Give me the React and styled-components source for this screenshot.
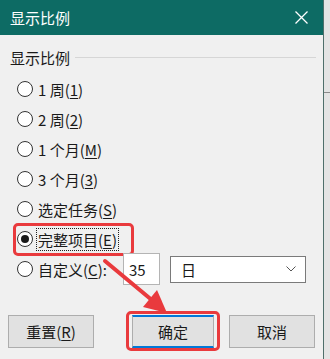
import React from "react";
import styled, { createGlobalStyle } from "styled-components";

const GlobalStyle = createGlobalStyle`
  html, body {
    margin: 0;
    padding: 0;
  }
  body {
    background: #e6e6e6;
    font-family: "Noto Sans CJK SC", "Microsoft YaHei", sans-serif;
  }
`;

const Screen = styled.div`
  display: flex;
  width: 330px;
  height: 359px;
  overflow: hidden;
`;

const Dialog = styled.div`
  position: relative;
  width: 323px;
  height: 359px;
  background: #f0f0f0;
  border-right: 1px solid #4f6f6b;
  display: flex;
  flex-direction: column;
`;

const Backdrop = styled.div`
  flex: 1;
  background: #e4e4e4;
  padding-top: 92px;
`;

const BackdropLine = styled.div`
  height: 1px;
  background: #8a8a8a;
`;

const TitleBar = styled.div`
  height: 35px;
  background: #0d6b64;
  display: flex;
  align-items: center;
  justify-content: space-between;
  padding: 0 15px 0 10px;
`;

const Title = styled.span`
  color: #fff;
  font-size: 15px;
  line-height: 1;
`;

const Body = styled.div`
  padding: 10px 7px 0 10px;
`;

const GroupHeader = styled.div`
  display: flex;
  align-items: center;
  gap: 5px;
  height: 24px;
`;

const GroupLabel = styled.span`
  font-size: 15px;
  color: #1a1a1a;
`;

const GroupLine = styled.div`
  flex: 1;
  height: 1px;
  background: #d6d6d6;
`;

const RadioList = styled.div`
  margin-top: 5px;
  display: flex;
  flex-direction: column;
`;

const Row = styled.div`
  position: relative;
  height: 30px;
  display: flex;
  align-items: center;
  padding-left: 7px;
`;

const Circle = styled.span`
  width: 16px;
  height: 16px;
  box-sizing: border-box;
  border-radius: 50%;
  border: 1px solid #333;
  background: #fff;
  display: flex;
  align-items: center;
  justify-content: center;
  flex-shrink: 0;
  &::after {
    content: "";
    width: 8px;
    height: 8px;
    border-radius: 50%;
    background: ${({ $checked }) => ($checked ? "#1a1a1a" : "transparent")};
  }
`;

const Label = styled.span`
  margin-left: 3px;
  padding: 0 1px;
  border: 1px ${({ $focused }) => ($focused ? "dotted #222" : "solid transparent")};
  font-size: 15px;
  line-height: 21px;
  color: #1a1a1a;
  white-space: nowrap;
  width: ${({ $width }) => ($width ? `${$width}px` : "auto")};
  u {
    text-underline-offset: 2px;
  }
`;

const Highlight = styled.div`
  position: absolute;
  border: 3px solid #e93a3d;
  border-radius: 5px;
  pointer-events: none;
  top: ${({ $top }) => $top}px;
  left: ${({ $left }) => $left}px;
  right: ${({ $right }) => $right}px;
  bottom: ${({ $bottom }) => $bottom}px;
`;

const NumberBox = styled.div`
  width: 37px;
  height: 32px;
  box-sizing: border-box;
  border: 1px solid #b4b4b4;
  background: #fff;
  font-size: 15px;
  display: flex;
  align-items: center;
  padding-left: 5px;
  color: #1a1a1a;
  margin-left: 2px;
`;

const Select = styled.div`
  width: 136px;
  height: 27px;
  box-sizing: border-box;
  border: 1px solid #7a7a7a;
  background: #fff;
  margin-left: 10px;
  display: flex;
  align-items: center;
  justify-content: space-between;
  padding: 0 9px 0 10px;
  font-size: 15px;
  color: #1a1a1a;
`;

const ButtonRow = styled.div`
  display: flex;
  align-items: center;
  margin-top: 31px;
  margin-left: -2px;
`;

const Button = styled.div`
  position: relative;
  width: ${({ $width }) => $width}px;
  margin-left: ${({ $gap }) => $gap || 0}px;
  height: 33px;
  box-sizing: border-box;
  background: #e1e1e1;
  border: 1px solid #adadad;
  border-top: ${({ $primary }) => ($primary ? "2px solid #0078d7" : "1px solid #adadad")};
  border-bottom: ${({ $primary }) => ($primary ? "2px solid #0078d7" : "1px solid #adadad")};
  display: flex;
  align-items: center;
  justify-content: center;
  font-size: 15px;
  color: #1a1a1a;
  u {
    text-underline-offset: 2px;
  }
`;

const Overlay = styled.svg`
  position: absolute;
  left: 0;
  top: 0;
  pointer-events: none;
`;

const options = [
  { text: "1 周(", key: "1" },
  { text: "2 周(", key: "2" },
  { text: "1 个月(", key: "M" },
  { text: "3 个月(", key: "3" },
  { text: "选定任务(", key: "S" },
  { text: "完整项目(", key: "E", checked: true },
];

const App = () => {
  return (
    <Screen>
      <GlobalStyle />
      <Dialog>
        <TitleBar>
          <Title>显示比例</Title>
          <svg width="13" height="13" viewBox="0 0 13 13">
            <path d="M0.5 0.5 L12.5 12.5 M12.5 0.5 L0.5 12.5" stroke="#fff" strokeWidth="1.3" />
          </svg>
        </TitleBar>
        <Body>
          <GroupHeader>
            <GroupLabel>显示比例</GroupLabel>
            <GroupLine />
          </GroupHeader>
          <RadioList>
            {options.map((o) => (
              <Row key={o.key}>
                <Circle $checked={o.checked} />
                <Label $focused={o.checked}>
                  {o.text}
                  <u>{o.key}</u>)
                </Label>
                {o.checked && <Highlight $top={-1} $left={3} $right={182} $bottom={-2} />}
              </Row>
            ))}
            <Row>
              <Circle />
              <Label $width={81}>
                自定义(<u>C</u>):
              </Label>
              <NumberBox>35</NumberBox>
              <Select>
                <span>日</span>
                <svg width="10" height="6" viewBox="0 0 10 6">
                  <path d="M0.5 0.5 L5 5 L9.5 0.5" fill="none" stroke="#555" strokeWidth="1" />
                </svg>
              </Select>
            </Row>
          </RadioList>
          <ButtonRow>
            <Button $width={86}>
              重置(<u>R</u>)
            </Button>
            <Button $width={82} $gap={38} $primary>
              确定
              <Highlight $top={-6} $left={-7} $right={-7} $bottom={-5} />
            </Button>
            <Button $width={86} $gap={15}>
              取消
            </Button>
          </ButtonRow>
        </Body>
        <Overlay width="323" height="359" viewBox="0 0 323 359">
          <line x1="105" y1="261" x2="153" y2="301" stroke="#e93a3d" strokeWidth="4" strokeLinecap="round" />
          <polygon points="167,313 143,307 157,290" fill="#e93a3d" />
        </Overlay>
      </Dialog>
      <Backdrop>
        <BackdropLine />
      </Backdrop>
    </Screen>
  );
};

export default App;
